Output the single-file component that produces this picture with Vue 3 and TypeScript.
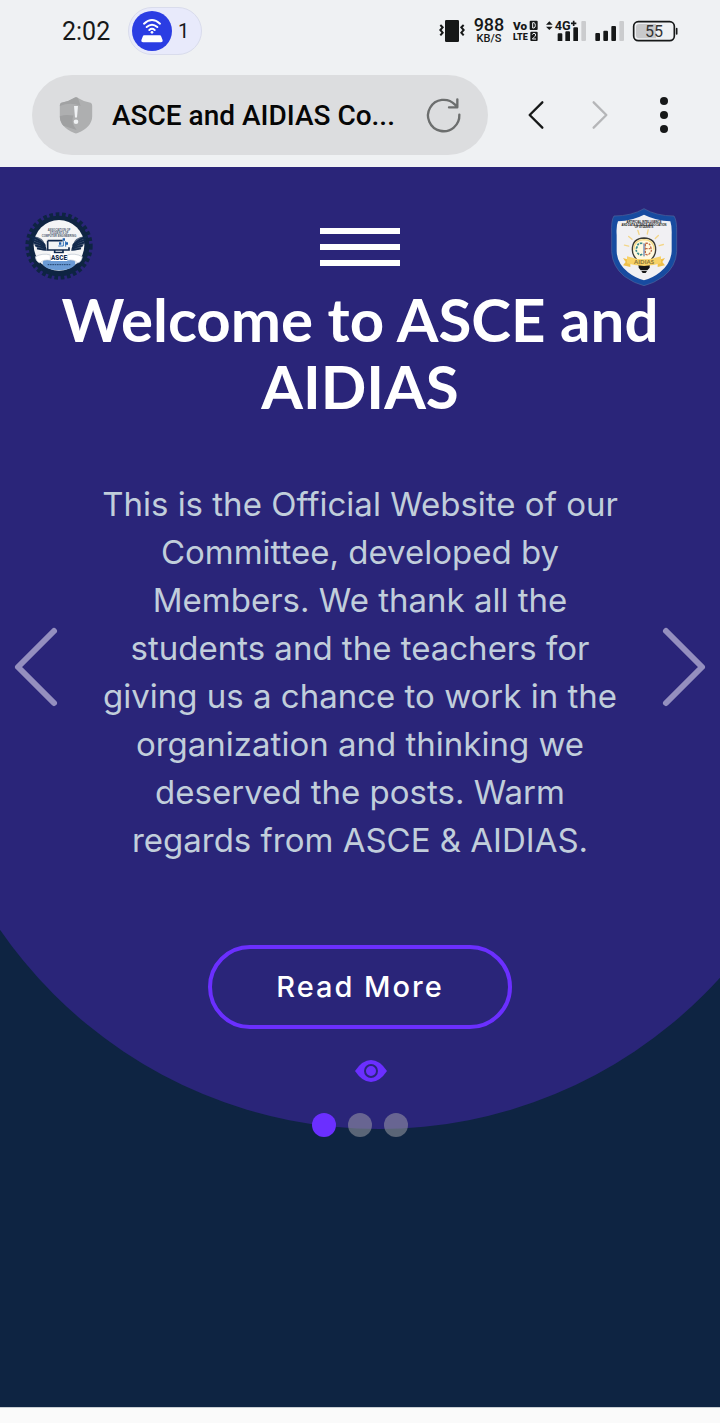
<script setup lang="ts">
import { ref } from 'vue'

const slides: string[] = ['Welcome', 'Events', 'Members']
const current = ref<number>(0)

function move(step: number): void {
  current.value = (current.value + step + slides.length) % slides.length
}

const rays: number[] = [-78, -50, -18, 12, 46, 76]
const feathers: number[] = [0, 1, 2, 3, 4]
</script>

<template>
  <div class="screen">
    <header class="chrome">
      <div class="status">
        <span class="time">2:02</span>
        <span class="hotspot">
          <svg class="hotspot-icon" viewBox="0 0 120 120" aria-hidden="true">
            <circle cx="60" cy="60" r="60" fill="#2b3de3" />
            <g fill="none" stroke="#fff" stroke-width="6" stroke-linecap="round">
              <path d="M36 38Q60 16 84 38" />
              <path d="M44 48Q60 34 76 48" />
              <path d="M52 57Q60 50 68 57" />
            </g>
            <circle cx="60" cy="64" r="4" fill="#fff" />
            <path d="M37 73H83Q87 73 88 77L92 88Q93 94 87 94H33Q27 94 28 88L32 77Q33 73 37 73Z" fill="#fff" />
          </svg>
          <span>1</span>
        </span>

        <div class="indicators">
          <svg class="vibrate" viewBox="0 0 78 66" aria-hidden="true">
            <rect x="18" width="42" height="66" rx="4" fill="#161818" />
            <path d="M4 15L11 22L4 30L11 38L4 46M74 15L67 22L74 30L67 38L74 46" fill="none" stroke="#161818" stroke-width="6" />
          </svg>
          <span class="speed"><b>988</b><small>KB/S</small></span>
          <svg class="volte" viewBox="0 0 75 66" aria-label="VoLTE">
            <g font-family="Roboto, sans-serif" font-weight="900" fill="#161818">
              <text x="0" y="29" font-size="35">Vo</text>
              <text x="0" y="60" font-size="27">LTE</text>
            </g>
            <rect x="50" y="2" width="24" height="28" rx="3" fill="#161818" />
            <rect x="52" y="35" width="22" height="28" rx="3" fill="#161818" />
            <path d="M59 8H63Q67 9 67 16Q67 23 63 24H59Z" fill="none" stroke="#eff1f3" stroke-width="3" />
            <path d="M58 44Q59 40 63 40Q68 40 68 45Q68 48 58 57H69" fill="none" stroke="#eff1f3" stroke-width="3" />
          </svg>
          <svg class="signal-net" viewBox="0 0 123 66" aria-hidden="true">
            <path d="M0 14L10 4L20 14ZM0 20L10 30L20 20Z" fill="#161818" />
            <path d="M38 40h8q3 0 3 3v20h-14v-20q0-3 3-3zM61 34h8q3 0 3 3v26h-14v-26q0-3 3-3zM85 22h8q3 0 3 3v38h-14v-38q0-3 3-3z" fill="#161818" />
            <rect x="106" y="3" width="14" height="60" rx="3" fill="#cbccce" />
            <text x="26" y="29" font-family="Roboto, sans-serif" font-size="38" font-weight="700" fill="#161818" stroke="#eff1f3" stroke-width="5" paint-order="stroke">4G</text>
            <path d="M75 10H91M83 2V18" stroke="#161818" stroke-width="5" />
          </svg>
          <svg class="signal" viewBox="0 0 90 66" aria-hidden="true">
            <rect x="1" y="39" width="14" height="24" rx="3" fill="#161818" />
            <rect x="25" y="32" width="14" height="31" rx="3" fill="#161818" />
            <rect x="49" y="18" width="14" height="45" rx="3" fill="#161818" />
            <rect x="73" y="3" width="14" height="60" rx="3" fill="#cbccce" />
          </svg>
          <svg class="battery" viewBox="0 0 135 66" aria-label="Battery 55%">
            <rect x="2" y="5" width="122" height="57" rx="14" fill="none" stroke="#161818" stroke-width="5" />
            <path d="M18 12H69V55H18Q9 55 9 46V21Q9 12 18 12Z" fill="#c8c9cb" />
            <path d="M131 26V42" stroke="#161818" stroke-width="5" stroke-linecap="round" />
            <text x="63" y="51" text-anchor="middle" font-family="Roboto, sans-serif" font-size="48" fill="#333">55</text>
          </svg>
        </div>
      </div>

      <div class="toolbar">
        <div class="address">
          <svg class="shield" viewBox="0 0 100 112" aria-hidden="true">
            <path d="M44 3Q50-1 56 3Q72 13 91 17Q99 18 99 27V58Q99 90 55 109Q50 112 45 109Q1 90 1 58V27Q1 18 9 17Q28 13 44 3Z" fill="#aeafb0" />
            <path d="M44 3Q50-1 56 3L64 27Q34 14 1 27Q1 18 9 17Q28 13 44 3Z" fill="#a1a2a3" />
            <path d="M1 58Q18 52 42 56Q33 78 52 100L12 87Q1 75 1 58Z" fill="#9fa0a1" />
            <path d="M44 27H56L53 62H47Z" fill="#eff1f3" />
            <circle cx="50" cy="75" r="7" fill="#eff1f3" />
          </svg>
          <span class="page-name">ASCE and AIDIAS Co...</span>
          <button class="plain" type="button" aria-label="Reload">
            <svg class="reload" viewBox="0 0 102 102" fill="none" stroke="#6c6e6e" stroke-width="7" stroke-linecap="round" stroke-linejoin="round">
              <path d="M97 50A47 47 0 1 1 84 20L91 27M91 4V28H66" />
            </svg>
          </button>
        </div>
        <button class="plain" type="button" aria-label="Back">
          <svg class="chevron" viewBox="0 0 48 84"><path d="M43 4L5 42L43 80" fill="none" stroke="#161818" stroke-width="7" stroke-linecap="round" stroke-linejoin="round" /></svg>
        </button>
        <button class="plain" type="button" aria-label="Forward" disabled>
          <svg class="chevron" viewBox="0 0 48 84"><path d="M5 4L43 42L5 80" fill="none" stroke="#b5b6b8" stroke-width="7" stroke-linecap="round" stroke-linejoin="round" /></svg>
        </button>
        <button class="plain" type="button" aria-label="More options">
          <svg class="dots" viewBox="0 0 8 36" fill="#161818"><circle cx="4" cy="4" r="4" /><circle cx="4" cy="18" r="4" /><circle cx="4" cy="32" r="4" /></svg>
        </button>
      </div>
    </header>

    <main class="hero">
      <div class="blob"></div>

      <nav class="nav">
        <svg class="logo-asce" viewBox="27 24 270 234" aria-label="ASCE">
          <circle cx="132" cy="138" r="95" fill="none" stroke="#0e2442" stroke-width="12" stroke-dasharray="11 8" />
          <circle cx="132" cy="138" r="82" fill="#12305a" stroke="#0e2442" stroke-width="18" />
          <circle cx="132" cy="136" r="76" fill="#f4f5f6" />
          <g font-family="Liberation Sans, sans-serif" font-size="8" font-weight="700" fill="#4a586c" text-anchor="middle">
            <text x="132" y="92">ASSOCIATION OF</text>
            <text x="132" y="101">STUDENTS OF</text>
            <text x="132" y="110">COMPUTER ENGINEERING</text>
          </g>
          <path d="M48 110Q66 108 80 117Q92 127 91 150Q76 154 60 138ZM216 110Q198 108 184 117Q172 127 173 150Q188 154 204 138Z" fill="#10284c" opacity="0.7" />
          <g fill="none" stroke="#10284c" stroke-width="5" stroke-linecap="round">
            <path v-for="n in feathers" :key="n" :d="`M${48 + n * 5} ${110 + n * 9}Q${70 + n * 3} ${116 + n * 8} ${89 + n} ${134 + n * 4}`" />
            <path v-for="n in feathers" :key="'r' + n" :d="`M${216 - n * 5} ${110 + n * 9}Q${194 - n * 3} ${116 + n * 8} ${175 - n} ${134 + n * 4}`" />
          </g>
          <path d="M98 122H143M162 142V150H98V122M119 152V158H144V152" fill="none" stroke="#10284c" stroke-width="5" />
          <path d="M130 138H145V124M152 140V124" fill="none" stroke="#2e70b9" stroke-width="3" />
          <path d="M132 127h7v7h-7zM143 115h7v7h-7zM152 127h7v7h-7z" fill="#2060ad" />
          <ellipse cx="132" cy="189" rx="49" ry="22" fill="#6b9bd5" />
          <path d="M61 170Q84 158 106 165V181Q85 177 75 189Q63 186 61 170ZM202 170Q179 158 157 165V181Q178 177 188 189Q200 186 202 170Z" fill="#fff" stroke="#b9c3ce" stroke-width="2" />
          <rect x="107" y="160" width="50" height="23" fill="#fff" />
          <text x="132" y="179" text-anchor="middle" font-family="Roboto, sans-serif" font-size="19" font-weight="900" fill="#10284c">ASCE</text>
          <path d="M98 194H166" stroke="#24456f" stroke-width="3" stroke-dasharray="5 2" />
        </svg>

        <button class="menu plain" type="button" aria-label="Open menu">
          <span></span><span></span><span></span>
        </button>

        <svg class="logo-aidias" viewBox="0 24 288 234" aria-label="AIDIAS">
          <path d="M132 26Q169 48 222 48Q231 60 230 102V155Q228 199 191 229Q160 251 132 257Q104 251 73 229Q37 199 35 155V102Q33 60 42 48Q95 48 132 26Z" fill="#174ba0" stroke="#4f659c" stroke-width="2" />
          <path d="M132 44Q168 62 211 64Q216 78 215 105V154Q213 190 180 217Q157 235 132 241Q107 235 84 217Q51 190 50 154V105Q48 78 54 64Q98 62 132 44Z" fill="#f1f0f3" />
          <g font-family="Liberation Sans, sans-serif" font-size="8" font-weight="700" fill="#111" text-anchor="middle">
            <text x="132" y="69">ARTIFICIAL INTELLIGENCE</text>
            <text x="132" y="77">AND DATA SCIENCE ASSOCIATION</text>
            <text x="132" y="85">OF STUDENTS</text>
          </g>
          <path v-for="a in rays" :key="a" d="M132 101V88" :transform="`rotate(${a} 132 148)`" stroke="#f3d68a" stroke-width="4" stroke-linecap="round" />
          <path d="M118 197Q117 187 108 176Q97 164 97 149Q97 115 132 114Q167 115 167 149Q167 164 156 176Q147 187 146 197Z" fill="#fff9df" stroke="#3b3a34" stroke-width="4" />
          <path d="M102 149Q102 120 132 119Q162 120 162 149" fill="none" stroke="#f5d987" stroke-width="4" />
          <path d="M127 130Q112 128 111 142Q105 150 113 159Q119 168 127 162" fill="none" stroke="#388b8b" stroke-width="5" stroke-dasharray="7 3" />
          <path d="M136 130Q151 128 152 142Q158 150 150 159Q144 168 136 162V130M136 146H151" fill="none" stroke="#c26b48" stroke-width="4" stroke-dasharray="7 3" />
          <path d="M132 130V169" stroke="#3a65ad" stroke-width="3" />
          <path d="M116 190H149V203L142 211H122L116 203ZM124 213H141L137 219H128Z" fill="#161616" />
          <path d="M69 174L91 181V201L69 196L77 186ZM195 174L173 181V201L195 196L187 186Z" fill="#f0c04a" />
          <path d="M81 169Q132 187 183 169V190Q132 206 81 190Z" fill="#f8d268" />
          <text x="132" y="193" text-anchor="middle" font-family="Lato, sans-serif" font-size="18" font-weight="900" fill="#8d7838">AIDIAS</text>
        </svg>
      </nav>

      <section class="carousel">
        <h1>Welcome to ASCE and AIDIAS</h1>
        <p>
          This is the Official Website of our Committee, developed by Members. We thank all the
          students and the teachers for giving us a chance to work in the organization and thinking
          we deserved the posts. Warm regards from ASCE &amp; AIDIAS.
        </p>
        <a class="more" href="#about">Read More</a>
        <svg class="eye" viewBox="0 0 96 66" aria-hidden="true">
          <path d="M0 33Q22 0 48 0T96 33Q74 66 48 66T0 33Z" fill="#6b2fff" />
          <circle cx="48" cy="33" r="18" fill="none" stroke="#2a2579" stroke-width="6" />
        </svg>
        <div class="pager">
          <button
            v-for="(slide, i) in slides"
            :key="slide"
            type="button"
            :class="{ active: i === current }"
            :aria-label="slide"
            @click="current = i"
          ></button>
        </div>

        <button class="plain arrow prev" type="button" aria-label="Previous slide" @click="move(-1)">
          <svg viewBox="0 0 42 78"><path d="M39 3L3 39L39 75" /></svg>
        </button>
        <button class="plain arrow next" type="button" aria-label="Next slide" @click="move(1)">
          <svg viewBox="0 0 42 78"><path d="M3 3L39 39L3 75" /></svg>
        </button>
      </section>
    </main>
    <footer class="edge"></footer>
  </div>
</template>

<style>
body {
  margin: 0;
  background: #fafafa;
}
</style>

<style scoped>
.screen {
  font-family: Inter, sans-serif;
}
svg {
  display: block;
  overflow: visible;
}
.plain {
  padding: 0;
  border: 0;
  background: none;
}
.chrome {
  background: #eff1f3;
  color: #161818;
  font-family: Roboto, sans-serif;
  padding-bottom: 12px;
}
.status {
  display: flex;
  align-items: center;
  height: 62px;
  padding: 0 42px 0 62px;
}
.time {
  font-size: 25px;
  width: 66px;
}
.hotspot {
  display: flex;
  align-items: center;
  gap: 6px;
  box-sizing: border-box;
  width: 74px;
  height: 48px;
  padding-left: 3px;
  border: 1px solid #d9dcec;
  border-radius: 24px;
  background: #e8eafb;
  font-size: 20px;
}
.hotspot-icon {
  width: 40px;
  height: 40px;
}
.indicators {
  display: flex;
  align-items: center;
  gap: 8px;
  margin-left: auto;
}
.indicators svg {
  height: 22px;
}
.vibrate {
  width: 26px;
}
.speed {
  display: flex;
  flex-direction: column;
  align-items: center;
  width: 32px;
}
.speed b {
  font-size: 18px;
  font-weight: 500;
  line-height: 15px;
}
.speed small {
  font-size: 11px;
  font-weight: 500;
  line-height: 13px;
}
.volte {
  width: 25px;
}
.signal-net {
  width: 41px;
}
.signal {
  width: 30px;
}
.battery {
  width: 45px;
}
.toolbar {
  display: flex;
  align-items: center;
  padding: 13px 24px 0 32px;
}
.toolbar > button {
  display: flex;
  justify-content: center;
  width: 64px;
}
.address {
  display: flex;
  align-items: center;
  flex: 1;
  min-width: 0;
  height: 80px;
  box-sizing: border-box;
  padding: 0 27px;
  margin-right: 16px;
  border-radius: 40px;
  background: #dcdddf;
}
.shield {
  width: 34px;
  height: 37px;
}
.page-name {
  flex: 1;
  margin-left: 19px;
  overflow: hidden;
  white-space: nowrap;
  color: #060606;
  font-size: 28px;
  font-weight: 500;
}
.reload {
  width: 34px;
  height: 34px;
}
.chevron {
  width: 16px;
  height: 28px;
}
.dots {
  width: 8px;
  height: 36px;
}
.hero {
  position: relative;
  overflow: hidden;
  padding-bottom: 270px;
  background: #0e2442;
  border-bottom: 1px solid #c9ced4;
}
.blob {
  position: absolute;
  top: 0;
  bottom: 278px;
  left: calc(50% - 441px);
  width: 920px;
  border-radius: 0 0 460px 460px;
  background: #2a2579;
}
.nav {
  position: relative;
  display: grid;
  grid-template-columns: 1fr auto 1fr;
  align-items: center;
  padding: 41px 24px 0;
}
.logo-asce {
  width: 90px;
  height: 78px;
}
.logo-aidias {
  width: 96px;
  height: 78px;
  justify-self: end;
}
.menu {
  display: grid;
  gap: 10px;
  width: 80px;
}
.menu span {
  height: 6px;
  background: #fff;
}
.carousel {
  position: relative;
  display: flex;
  flex-direction: column;
  align-items: center;
  text-align: center;
}
h1 {
  margin: 0;
  padding: 0 40px;
  color: #fff;
  font-family: Lato, sans-serif;
  font-size: 60px;
  font-weight: 700;
  line-height: 67px;
}
p {
  margin: 60px 0 81px;
  padding: 0 92px;
  color: #c1cedb;
  font-size: 33px;
  line-height: 48px;
}
.more {
  box-sizing: border-box;
  width: 304px;
  border: 4px solid #6b2fff;
  border-radius: 42px;
  color: #fff;
  font-size: 29px;
  font-weight: 500;
  line-height: 76px;
  letter-spacing: 2px;
  text-decoration: none;
}
.eye {
  width: 32px;
  height: 22px;
  margin: 31px 0 31px 22px;
}
.pager {
  display: flex;
  gap: 12px;
}
.pager button {
  width: 24px;
  height: 24px;
  padding: 0;
  border: 0;
  border-radius: 50%;
  background: rgba(166, 166, 172, 0.5);
}
.pager .active {
  background: #6b2fff;
}
.arrow {
  position: absolute;
  top: 342px;
}
.arrow svg {
  width: 42px;
  height: 78px;
  fill: none;
  stroke: #948fbf;
  stroke-width: 6;
  stroke-linecap: round;
  stroke-linejoin: round;
}
.prev {
  left: 15px;
}
.next {
  right: 15px;
}
.edge {
  height: 15px;
  background: #fafafa;
}
</style>
